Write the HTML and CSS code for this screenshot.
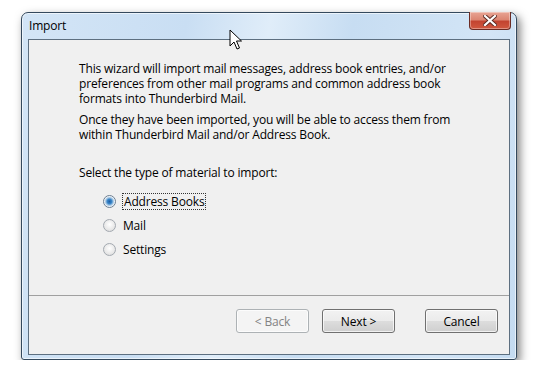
FILE: index.html
```html
<!DOCTYPE html>
<html>
<head>
    <title>Import</title>
    <meta name="viewport" content="width=device-width, initial-scale=1">
    <link rel="stylesheet" href="styles.css">
</head>
<body>
    <div class="window">
        <div class="titlebar">
            <span class="title">Import</span>
            <button class="close-btn" aria-label="Close">
                <svg width="14" height="11" viewBox="0 0 14 11">
                    <path d="M2 1 L12 10 M12 1 L2 10" stroke="#5a2a22" stroke-width="4" stroke-linecap="square"/>
                    <path d="M2 1 L12 10 M12 1 L2 10" stroke="#ffffff" stroke-width="2.2" stroke-linecap="square"/>
                </svg>
            </button>
        </div>
        <div class="client">
            <div class="content">
                <p>This wizard will import mail messages, address book entries, and/or preferences from other mail programs and common address book formats into Thunderbird Mail.</p>
                <p>Once they have been imported, you will be able to access them from within Thunderbird Mail and/or Address Book.</p>
                <p class="prompt">Select the type of material to import:</p>
                <div class="options">
                    <label class="option"><span class="radio checked"></span><span class="focus">Address Books</span></label>
                    <label class="option"><span class="radio"></span><span>Mail</span></label>
                    <label class="option"><span class="radio"></span><span>Settings</span></label>
                </div>
            </div>
            <div class="footer">
                <button class="btn" disabled>&lt; Back</button>
                <button class="btn">Next &gt;</button>
                <button class="btn cancel">Cancel</button>
            </div>
        </div>
    </div>

    <!-- mouse pointer sitting on the title bar -->
    <svg class="cursor" width="14" height="22" viewBox="0 0 14 22">
        <path d="M1 1 L1 17 L5 13 L8 20 L10.5 19 L7.5 12 L12.5 12 Z" fill="#ffffff" stroke="#000000" stroke-width="1" stroke-linejoin="round"/>
    </svg>
</body>
</html>
```

FILE: styles.css
```css
body {
    margin: 0;
    background: #ffffff;
    font-family: "Open Sans", "Noto Sans", sans-serif;
    font-size: 12px;
    letter-spacing: -0.17px;
    color: #000000;
}
.window {
    position: relative;
    box-sizing: border-box;
    width: 496px;
    height: 348px;
    margin: 12px 0 0 21px;
    padding: 0 6px 6px 6px;
    border: 1px solid #34495d;
    border-radius: 7px 7px 3px 3px;
    background: linear-gradient(100deg, #d3e5f6 0%, #c9def3 30%, #e0edf9 45%, #c7ddf2 60%, #d3e5f6 85%, #c4dbf1 100%);
    box-shadow: 3px 4px 10px rgba(0, 0, 0, 0.5), inset 0 0 0 1px rgba(255, 255, 255, 0.6);
}
.titlebar {
    display: flex;
    justify-content: space-between;
    align-items: flex-start;
    height: 26px;
}
.title {
    margin: 4px 0 0 1px;
    font-size: 12px;
    color: #000000;
}
.close-btn {
    display: flex;
    align-items: center;
    justify-content: center;
    width: 42px;
    height: 18px;
    margin-top: -1px;
    margin-right: -1px;
    padding: 0;
    border: 1px solid #6b2b23;
    border-top: none;
    border-radius: 0 0 4px 4px;
    background: linear-gradient(to bottom, #e8a493 0%, #dc8672 45%, #c34430 55%, #d0583f 100%);
    box-shadow: inset 0 0 0 1px rgba(255, 255, 255, 0.35);
}
.client {
    display: flex;
    flex-direction: column;
    box-sizing: border-box;
    height: 316px;
    border: 1px solid #5d6f80;
    background: #f0f0f0;
}
.content {
    flex: 1;
    padding: 21px 30px 0 50px;
}
.content p {
    margin: 0 0 6px 0;
    line-height: 15px;
}
.content .prompt {
    margin-top: 23px;
}
.options {
    display: flex;
    flex-direction: column;
    gap: 7px;
    margin: 13px 0 0 24px;
}
.option {
    display: flex;
    align-items: center;
    height: 17px;
}
.radio {
    box-sizing: border-box;
    width: 13px;
    height: 13px;
    margin-right: 7px;
    border: 1px solid #a3a9b0;
    border-radius: 50%;
    background: radial-gradient(circle at 50% 40%, #ffffff 0%, #e8e8e8 60%, #d6d6d6 100%);
}
.radio.checked {
    border-color: #6b7d90;
    background: radial-gradient(circle, #1d5ea6 0%, #3a86c8 30%, #8fb8dc 45%, #ffffff 70%, #e4e4e4 100%);
}
.focus {
    padding: 0 1px;
    outline: 1px dotted #333333;
    line-height: 15px;
}
.footer {
    display: flex;
    justify-content: flex-end;
    gap: 13px;
    height: 59px;
    box-sizing: border-box;
    padding: 13px 11px 0 0;
    border-top: 1px solid #a0a0a0;
}
.btn {
    box-sizing: border-box;
    width: 73px;
    height: 24px;
    padding: 0;
    border: 1px solid #707070;
    border-radius: 3px;
    background: linear-gradient(to bottom, #f2f2f2 0%, #ebebeb 50%, #dddddd 50%, #cfcfcf 100%);
    box-shadow: inset 0 0 0 1px rgba(255, 255, 255, 0.7);
    font-family: "Open Sans", "Noto Sans", sans-serif;
    font-size: 12px;
    letter-spacing: -0.17px;
    color: #000000;
}
.btn:disabled {
    border-color: #adb2b5;
    background: #f4f4f4;
    color: #838383;
}
.btn.cancel {
    margin-left: 17px;
}
.cursor {
    position: absolute;
    left: 229px;
    top: 29px;
}
```
